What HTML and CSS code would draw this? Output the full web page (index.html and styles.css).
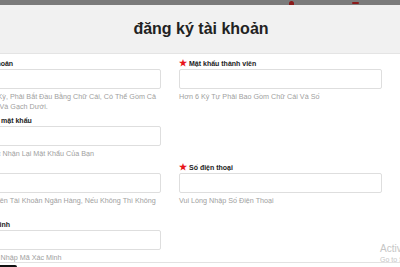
FILE: index.html
```html
<!DOCTYPE html>
<html lang="vi">
<head>
    <meta charset="UTF-8">
    <meta name="viewport" content="width=device-width, initial-scale=1.0">
    <title>Đăng ký tài khoản</title>
    <link rel="stylesheet" href="styles.css">
</head>
<body>
    <div class="topbar">
        <span class="top-icon dot"></span>
        <span class="top-icon arc"></span>
    </div>
    <header>
        <h1>đăng ký tài khoản</h1>
    </header>

    <div class="form">
        <!-- row 1 -->
        <div class="field">
            <label><span class="star">★</span>Tên tài khoản</label>
            <input type="text">
            <p class="hint">Chữ Số Bất Kỳ, Phải Bắt Đầu Bằng Chữ Cái, Có Thể Gồm Cả Chữ Cái, Số Và Gạch Dưới.</p>
        </div>
        <div class="field">
            <label><span class="star">★</span>Mật khẩu thành viên</label>
            <input type="password">
            <p class="hint">Hơn 6 Ký Tự Phải Bao Gồm Chữ Cái Và Số</p>
        </div>

        <!-- row 2 -->
        <div class="field">
            <label><span class="star">★</span>Xác nhận mật khẩu</label>
            <input type="password">
            <p class="hint">Vui Lòng Xác Nhận Lại Mật Khẩu Của Bạn</p>
        </div>
        <div class="field"></div>

        <!-- row 3 -->
        <div class="field">
            <label><span class="star">★</span>Họ tên</label>
            <input type="text">
            <p class="hint">Phải Giống Tên Tài Khoản Ngân Hàng, Nếu Không Thì Không Thể Rút</p>
        </div>
        <div class="field">
            <label><span class="star">★</span>Số điện thoại</label>
            <input type="text">
            <p class="hint">Vui Lòng Nhập Số Điện Thoại</p>
        </div>

        <!-- row 4 -->
        <div class="field">
            <label><span class="star">★</span>Mã xác minh</label>
            <input type="text">
            <p class="hint">Xin Vui Lòng Nhập Mã Xác Minh</p>
        </div>
        <div class="field"></div>
    </div>

    <div class="footer">
        <button class="submit">Đăng ký</button>
    </div>

    <div class="watermark">
        <div class="wm-title">Activate Windows</div>
        <div class="wm-sub">Go to Settings to activate Windows.</div>
    </div>
</body>
</html>
```

FILE: styles.css
```css
body {
    margin: 0;
    font-family: "Liberation Sans", Arial, sans-serif;
    background: #fff;
    color: #222;
    overflow: hidden;
}
.topbar {
    height: 5px;
    background: #7b7b7b;
    position: relative;
}
.top-icon {
    position: absolute;
    background: #8b1a1a;
}
.top-icon.dot {
    left: 289px;
    top: 1px;
    width: 5px;
    height: 4px;
    border-radius: 3px 3px 0 0;
}
.top-icon.arc {
    left: 352px;
    top: 2px;
    width: 7px;
    height: 2px;
    border-radius: 2px;
}
header {
    background: #f1f1f1;
    height: 48px;
    border-bottom: 1px solid #e4e4e4;
    display: flex;
    align-items: center;
    justify-content: center;
}
header h1 {
    margin: 0 0 0 2px;
    font-size: 16px;
    font-weight: bold;
    color: #222;
}
.form {
    display: grid;
    grid-template-columns: 203px 203px;
    column-gap: 18px;
    margin: 3px 0 0 -42px;
}
.field {
    margin-bottom: 2px;
}
.field label {
    display: block;
    height: 12px;
    line-height: 12px;
    font-size: 7px;
    font-weight: bold;
    color: #222;
}
.star {
    color: #e8141b;
    font-size: 9px;
    margin-right: 2px;
}
.field input {
    display: block;
    box-sizing: border-box;
    width: 100%;
    height: 20px;
    margin: 0;
    border: 1px solid #dedede;
    border-radius: 2px;
    background: #fff;
}
.hint {
    margin: 3px 0 0;
    font-size: 7.2px;
    line-height: 10px;
    color: #a0a0a0;
}
.footer {
    border-top: 1px solid #e2e2e2;
    margin-top: -3px;
    padding-top: 2px;
}
.submit {
    border: none;
    background: #111;
    color: #fff;
    width: 60px;
    height: 20px;
    margin-left: -43px;
    border-radius: 2px;
}
.watermark {
    position: absolute;
    left: 380px;
    top: 242px;
    white-space: nowrap;
    color: #c6c6c6;
}
.wm-title {
    font-size: 10px;
    line-height: 13px;
}
.wm-sub {
    font-size: 7px;
    line-height: 9px;
}
```
